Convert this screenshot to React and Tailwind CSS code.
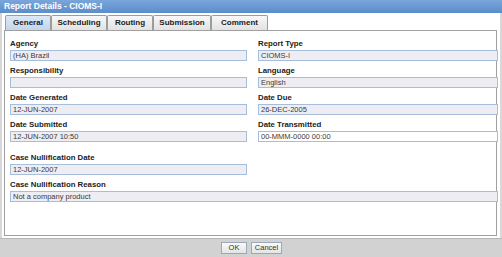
import React from 'react';

const tabs = [
    { name: 'General', w: 'w-[46px]' },
    { name: 'Scheduling', w: 'w-[56px]' },
    { name: 'Routing', w: 'w-[46px]' },
    { name: 'Submission', w: 'w-[58px]' },
    { name: 'Comment', w: 'w-[57px]' },
];

const Field = ({ label, value, editable, className = '' }) => (
    <div className={`flex flex-col ${className}`}>
        <div className="text-[7.8px] leading-[10px] font-bold text-[#222] h-[10px]">{label}</div>
        <div
            className={`mt-[1px] h-[11px] border border-[#a7bedb] px-[2px] text-[7.5px] leading-[9px] text-[#3a3a3a] ${editable ? 'bg-white' : 'bg-[#efedf4]'}`}
        >
            {value}
        </div>
    </div>
);

export default function App() {
    return (
        <div
            className="w-[502px] h-[257px] flex flex-col bg-white overflow-hidden"
            style={{ fontFamily: '"Liberation Sans", Arial, sans-serif' }}
        >
            {/* Title bar */}
            <div className="h-[13px] bg-gradient-to-b from-[#7aa6da] to-[#5b8dcb] px-[4px] flex items-center">
                <span className="text-[8.5px] font-bold text-white leading-none">Report Details - CIOMS-I</span>
            </div>

            {/* Body */}
            <div className="flex-1 flex flex-col pl-[2px] pr-[3px] pt-[2px] pb-[2px] border-x-[2px] border-[#d8d8d8]">
                {/* Tabs */}
                <div className="flex h-[15px] pl-[1px] items-end">
                    {tabs.map((t, i) => (
                        <div
                            key={t.name}
                            className={`${t.w} h-[15px] flex items-center justify-center border border-b-0 border-[#9c9c9c] rounded-t-[2px] text-[8px] font-bold text-[#222] ${i === 0 ? 'bg-gradient-to-b from-[#dce8f5] to-[#c4d6ec]' : 'bg-gradient-to-b from-[#f8f8f8] to-[#e2e2e2]'}`}
                        >
                            {t.name}
                        </div>
                    ))}
                </div>

                {/* Panel */}
                <div className="flex-1 border border-[#a0a0a0] pl-[5px] pr-[2px] pt-[8px]">
                    <div className="grid grid-cols-[237px_240px] gap-x-[11px] gap-y-[5px]">
                        <Field label="Agency" value="(HA) Brazil" />
                        <Field label="Report Type" value="CIOMS-I" />
                        <Field label="Responsibility" value="" />
                        <Field label="Language" value="English" />
                        <Field label="Date Generated" value="12-JUN-2007" />
                        <Field label="Date Due" value="26-DEC-2005" />
                        <Field label="Date Submitted" value="12-JUN-2007 10:50" />
                        <Field label="Date Transmitted" value="00-MMM-0000 00:00" editable />
                        <Field label="Case Nullification Date" value="12-JUN-2007" className="mt-[6px]" />
                        <div />
                        <Field label="Case Nullification Reason" value="Not a company product" className="col-span-2" />
                    </div>
                </div>
            </div>

            {/* Footer */}
            <div className="h-[19px] bg-[#d2d2d2] border-t border-[#b8b8b8] flex items-center justify-center gap-[4px] pl-[1px]">
                <button className="w-[26px] h-[12px] border border-[#9aa8bc] bg-gradient-to-b from-[#fafafa] to-[#e4e4e4] text-[7.5px] leading-none text-[#333]">
                    OK
                </button>
                <button className="w-[31px] h-[12px] border border-[#9aa8bc] bg-gradient-to-b from-[#fafafa] to-[#e4e4e4] text-[7.5px] leading-none text-[#333]">
                    Cancel
                </button>
            </div>
        </div>
    );
}
